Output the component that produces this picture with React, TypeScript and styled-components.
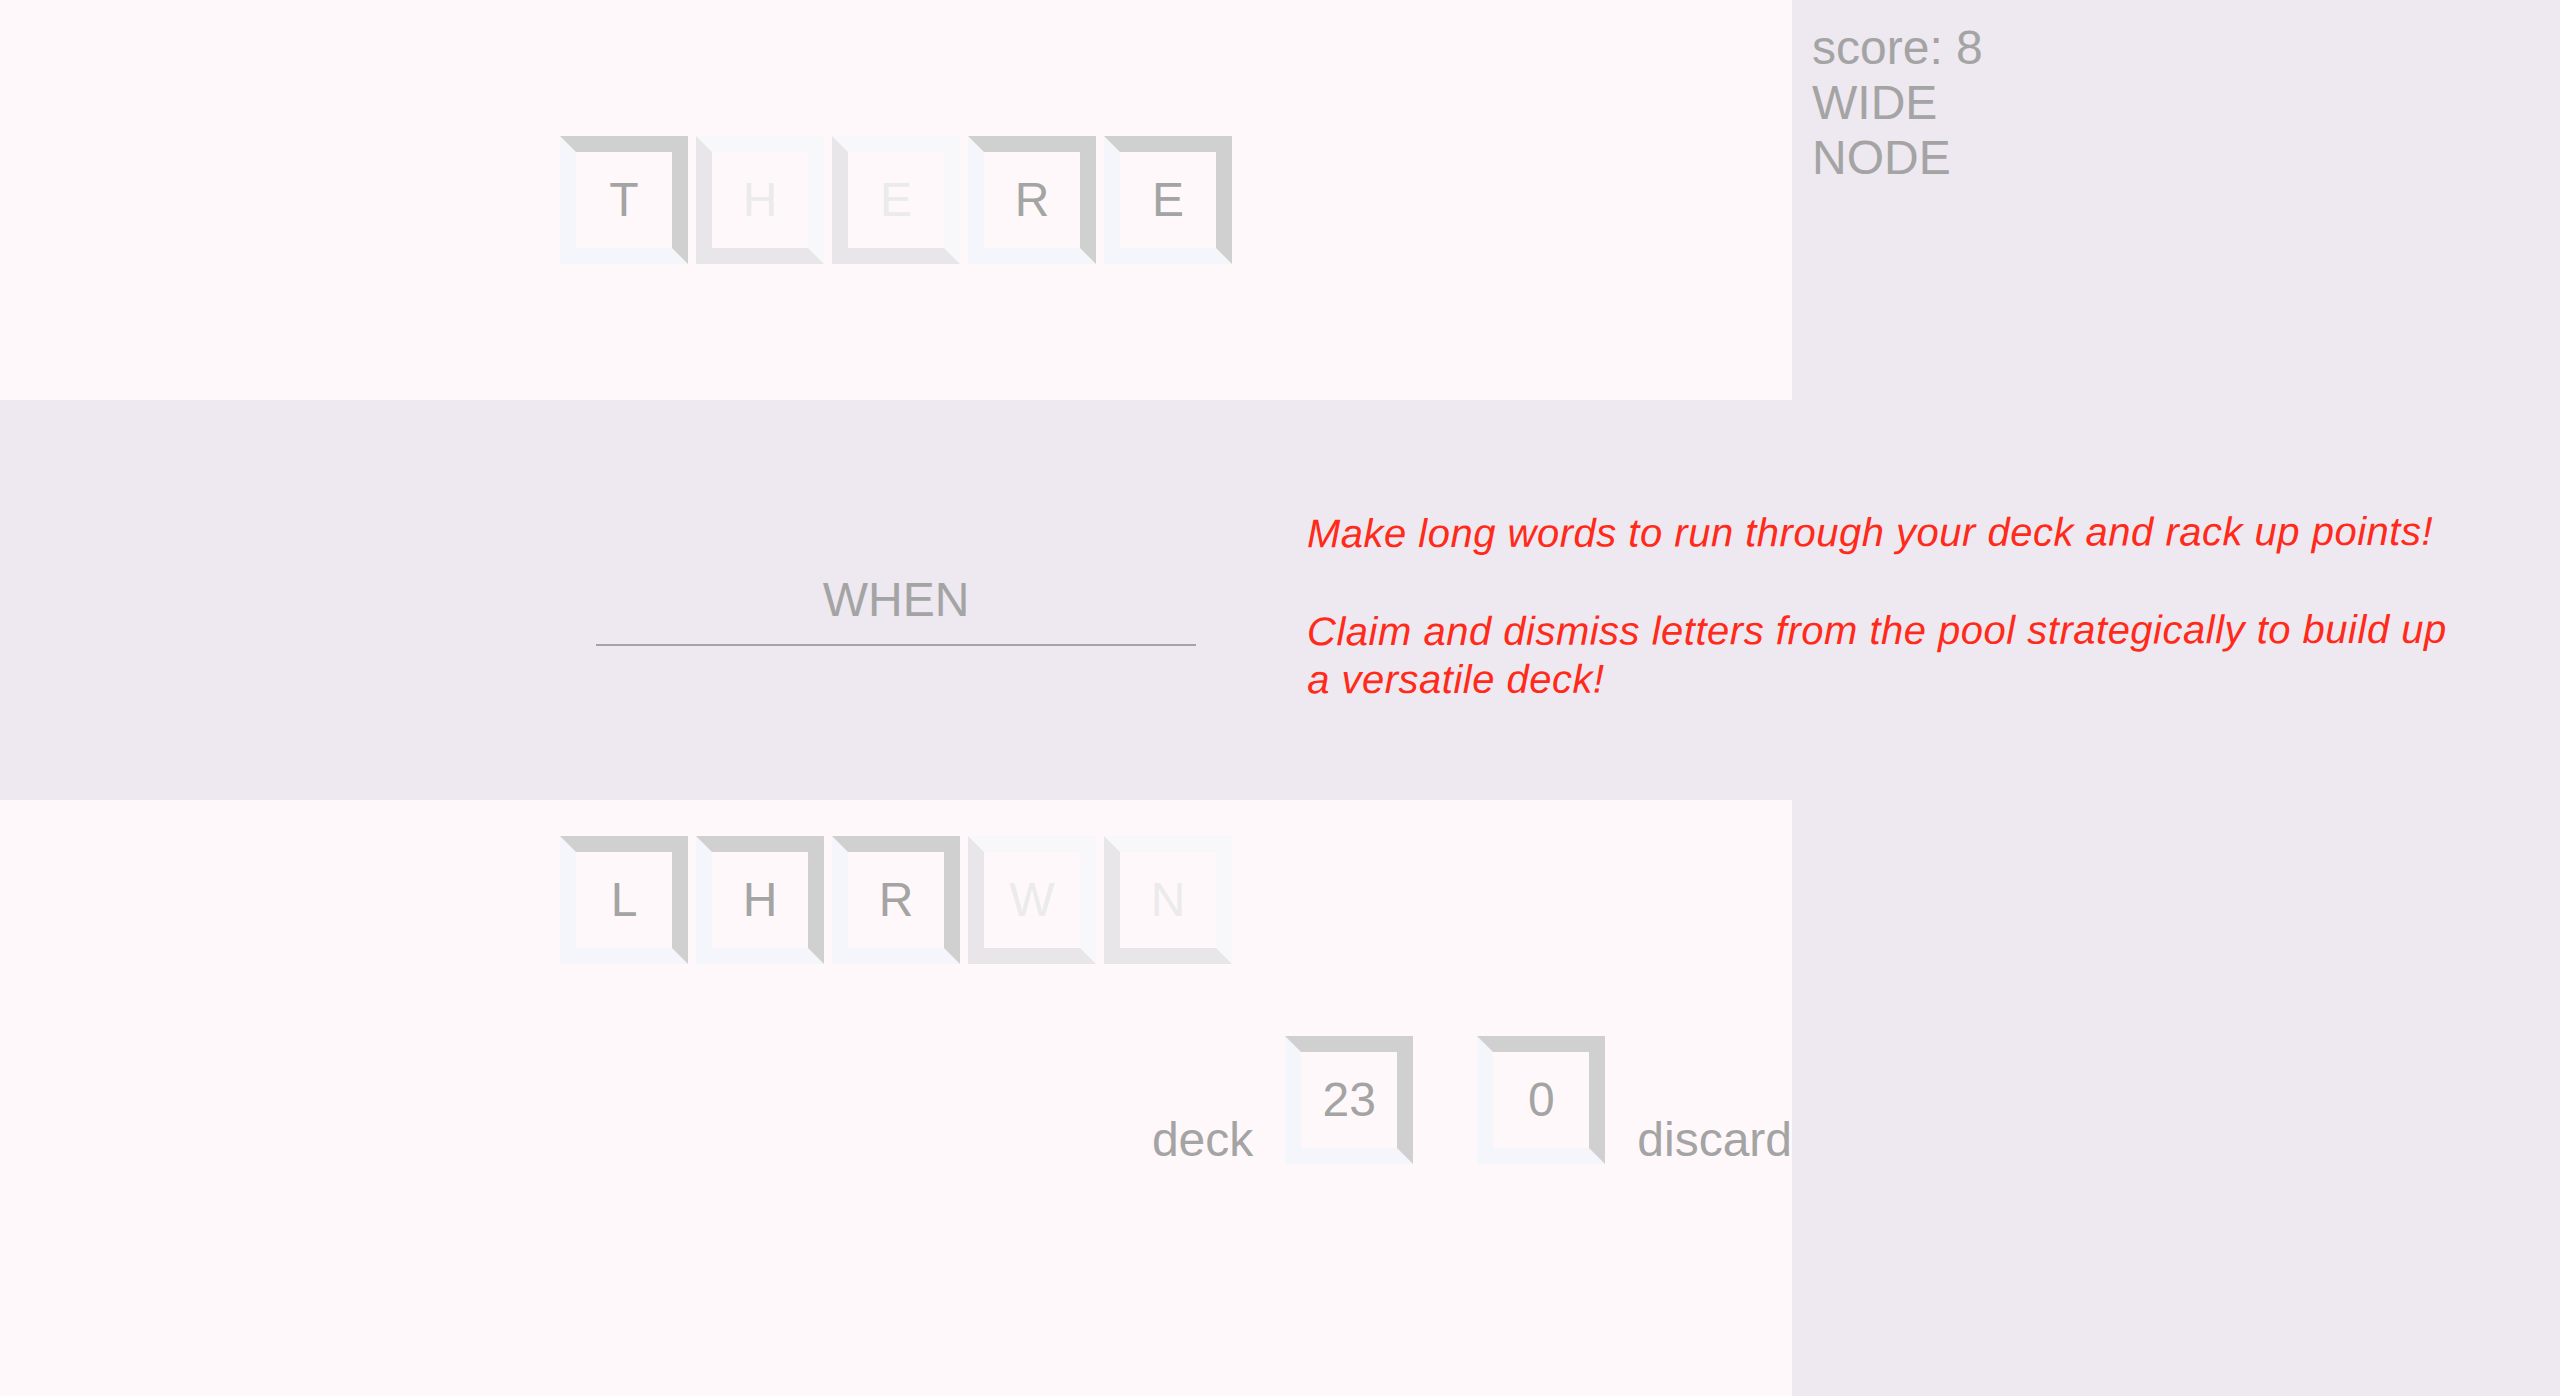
import React from "react";
import styled, { createGlobalStyle } from "styled-components";

const GlobalStyle = createGlobalStyle`
  html, body {
    margin: 0;
    padding: 0;
    background: #eee8f0;
    font-family: "Liberation Sans", Arial, Helvetica, sans-serif;
  }
`;

const GRAY = "#a4a4a4";
const PANEL = "#fff8fa";

const Page = styled.div`
  display: grid;
  grid-template-columns: 1792px 1fr;
  grid-template-rows: 400px 400px 1fr;
  min-height: 100vh;
`;

const WordPanel = styled.section`
  grid-column: 1;
  grid-row: 1;
  background: ${PANEL};
  display: flex;
  align-items: center;
  justify-content: center;
`;

const Sidebar = styled.aside`
  grid-column: 2;
  grid-row: 1;
  padding: 20px;
  color: ${GRAY};
  font-size: 48px;
`;

const SideLine = styled.div`
  line-height: normal;
`;

const Band = styled.section`
  grid-column: 1 / -1;
  grid-row: 2;
  display: flex;
  align-items: flex-start;
  padding: 0 101px 0 596px;
  gap: 111px;
`;

const WordInput = styled.input`
  flex-shrink: 0;
  width: 600px;
  height: 55px;
  margin: 156px 0 0;
  padding: 16px 0 17px;
  border: none;
  border-bottom: 2px solid ${GRAY};
  background: transparent;
  font-family: "Liberation Sans", Arial, sans-serif;
  font-size: 48px;
  color: ${GRAY};
  text-align: center;
  outline: none;
`;

const Instructions = styled.div`
  flex: 1;
  margin-top: 108px;
  color: #ff2a1a;
  font-style: italic;
  font-size: 40px;
  line-height: 48px;
  letter-spacing: 0.5px;
  transform: rotate(-0.12deg);
`;

const Para = styled.p`
  margin: 0;
  & + & {
    margin-top: 50px;
  }
`;

const HandPanel = styled.section`
  grid-column: 1;
  grid-row: 3;
  background: ${PANEL};
  display: flex;
  flex-direction: column;
  padding-top: 32px;
`;

const TileRow = styled.div`
  display: flex;
  justify-content: center;
`;

const Tile = styled.div<{ $active: boolean }>`
  width: 96px;
  height: 96px;
  margin: 4px;
  border-style: solid;
  border-width: 16px;
  border-color: ${(p) =>
    p.$active
      ? "#d0d0d0 #d0d0d0 #f5f6fb #f5f6fb"
      : "#f8f8fb #f8f8fb #e8e6e8 #e8e6e8"};
  display: flex;
  align-items: center;
  justify-content: center;
  font-size: 48px;
  line-height: normal;
  color: ${(p) => (p.$active ? GRAY : "#ebebeb")};
`;

const TileGlyph = styled.span`
  position: relative;
  top: -1px;
`;

const PileRow = styled.div`
  display: flex;
  justify-content: flex-end;
  align-items: flex-end;
  margin-top: 68px;
`;

const PileTile = styled(Tile)`
  margin: 0 32px;
`;

const PileLabel = styled.span`
  font-size: 48px;
  line-height: 1;
  color: ${GRAY};
`;

const wordTiles = [
  { ch: "T", active: true },
  { ch: "H", active: false },
  { ch: "E", active: false },
  { ch: "R", active: true },
  { ch: "E", active: true },
];

const handTiles = [
  { ch: "L", active: true },
  { ch: "H", active: true },
  { ch: "R", active: true },
  { ch: "W", active: false },
  { ch: "N", active: false },
];

export default function App() {
  return (
    <>
      <GlobalStyle />
      <Page>
        <WordPanel>
          <TileRow>
            {wordTiles.map((t, i) => (
              <Tile key={i} $active={t.active}>
                <TileGlyph>{t.ch}</TileGlyph>
              </Tile>
            ))}
          </TileRow>
        </WordPanel>
        <Sidebar>
          <SideLine>score: 8</SideLine>
          <SideLine>WIDE</SideLine>
          <SideLine>NODE</SideLine>
        </Sidebar>
        <Band>
          <WordInput readOnly value="WHEN" />
          <Instructions>
            <Para>Make long words to run through your deck and rack up points!</Para>
            <Para>
              Claim and dismiss letters from the pool strategically to build up a versatile deck!
            </Para>
          </Instructions>
        </Band>
        <HandPanel>
          <TileRow>
            {handTiles.map((t, i) => (
              <Tile key={i} $active={t.active}>
                <TileGlyph>{t.ch}</TileGlyph>
              </Tile>
            ))}
          </TileRow>
          <PileRow>
            <PileLabel>deck</PileLabel>
            <PileTile $active>
              <TileGlyph>23</TileGlyph>
            </PileTile>
            <PileTile $active>
              <TileGlyph>0</TileGlyph>
            </PileTile>
            <PileLabel>discard</PileLabel>
          </PileRow>
        </HandPanel>
      </Page>
    </>
  );
}
